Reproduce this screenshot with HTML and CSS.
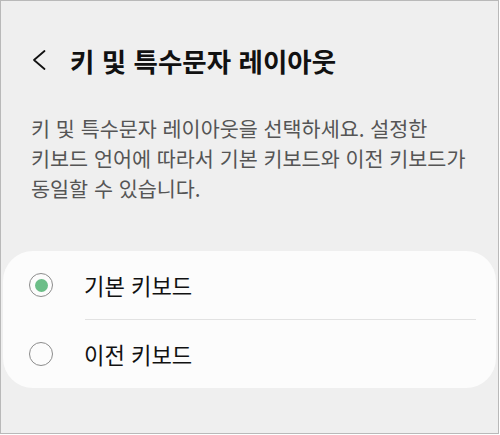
FILE: index.html
```html
<!DOCTYPE html>
<html lang="ko">
<head>
<meta charset="utf-8"/>
<meta content="width=device-width, initial-scale=1.0" name="viewport"/>
<title>키 및 특수문자 레이아웃</title>
<link rel="stylesheet" href="styles.css">
</head>
<body>
<div class="screen">
  <div class="top-bar">
    <svg class="back" width="16" height="22" viewBox="0 0 16 22">
      <path d="M13.5 2 L3 11 L13.5 20" fill="none" stroke="#111" stroke-width="1.8" stroke-linecap="round" stroke-linejoin="round"/>
    </svg>
    <h1>키 및 특수문자 레이아웃</h1>
  </div>
  <p class="desc">키 및 특수문자 레이아웃을 선택하세요. 설정한<br>키보드 언어에 따라서 기본 키보드와 이전 키보드가<br>동일할 수 있습니다.</p>
  <div class="card">
    <label class="option">
      <span class="radio checked"></span>
      <span class="option-text">기본 키보드</span>
    </label>
    <div class="divider"></div>
    <label class="option">
      <span class="radio"></span>
      <span class="option-text">이전 키보드</span>
    </label>
  </div>
</div>
</body>
</html>
```

FILE: styles.css
```css
body {
  margin: 0;
  font-family: "Noto Sans CJK KR", "Noto Sans", sans-serif;
}

.screen {
  box-sizing: border-box;
  width: 499px;
  height: 434px;
  border: 1px solid #b9b9b9;
  background: #efefef;
  overflow: hidden;
}

.top-bar {
  display: flex;
  align-items: center;
  height: 40px;
  padding: 39px 0 0 30px;
}

.back {
  display: block;
}

h1 {
  margin: 0 0 0 23px;
  font-size: 26.5px;
  font-weight: 700;
  color: #111;
}

.desc {
  margin: 33px 0 0;
  padding-left: 30px;
  font-size: 20.7px;
  line-height: 30px;
  color: #555;
  white-space: nowrap;
}

.card {
  margin: 48px 2px 0;
  background: #fcfcfc;
  border-radius: 30px;
}

.option {
  display: flex;
  align-items: center;
  height: 68px;
  padding-left: 26px;
}

.radio {
  box-sizing: border-box;
  width: 24px;
  height: 24px;
  border: 1.5px solid #8c8c8c;
  border-radius: 50%;
  display: flex;
  align-items: center;
  justify-content: center;
}

.radio.checked::after {
  content: "";
  width: 13px;
  height: 13px;
  border-radius: 50%;
  background: #6cbe88;
}

.option-text {
  margin-left: 31px;
  font-size: 22.2px;
  color: #111;
}

.divider {
  height: 1px;
  margin: 0 20px 0 82px;
  background: #e2e2e2;
}
```
